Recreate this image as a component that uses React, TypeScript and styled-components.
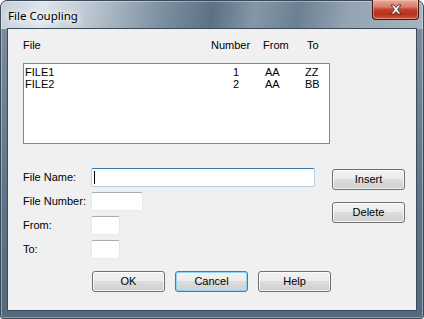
import * as React from 'react'
import styled, { createGlobalStyle, css } from 'styled-components'

const GlobalStyle = createGlobalStyle`
	html, body {
		margin: 0;
		padding: 0;
		background: #ffffff;
	}
	body {
		font-family: 'Liberation Sans', Arial, sans-serif;
		font-size: 11px;
		color: #000000;
	}
`

interface FileRow {
	name: string
	number: number
	from: string
	to: string
}

const rows: FileRow[] = [
	{ name: 'FILE1', number: 1, from: 'AA', to: 'ZZ' },
	{ name: 'FILE2', number: 2, from: 'AA', to: 'BB' },
]

export default function App() {
	return (
		<>
			<GlobalStyle />
			<Window>
				<TitleBar>
					<Title>File Coupling</Title>
					<CloseButton aria-label="Close">
						<svg width="14" height="11" viewBox="0 0 14 11">
							<path
								d="M2 1 L5 1 L7 3.5 L9 1 L12 1 L8.6 5.5 L12 10 L9 10 L7 7.5 L5 10 L2 10 L5.4 5.5 Z"
								fill="#ffffff"
								stroke="#4a2a28"
								strokeWidth="0.9"
								strokeLinejoin="round"
							/>
						</svg>
					</CloseButton>
				</TitleBar>
				<Client>
					<ListHeader>
						<span>File</span>
						<span>Number</span>
						<span>From</span>
						<span>To</span>
					</ListHeader>
					<ListBox>
						{rows.map(row => (
							<ListRow key={row.name}>
								<span>{row.name}</span>
								<NumberCell>{row.number}</NumberCell>
								<span />
								<span>{row.from}</span>
								<span>{row.to}</span>
							</ListRow>
						))}
					</ListBox>
					<Middle>
						<Form>
							<Label>File Name:</Label>
							<TextField $width={224} $focused>
								<Caret />
							</TextField>
							<Label>File Number:</Label>
							<TextField $width={52} />
							<Label>From:</Label>
							<TextField $width={29} />
							<Label>To:</Label>
							<TextField $width={29} />
						</Form>
						<SideButtons>
							<Button>Insert</Button>
							<Button>Delete</Button>
						</SideButtons>
					</Middle>
					<Footer>
						<Button>OK</Button>
						<Button $default>Cancel</Button>
						<Button>Help</Button>
					</Footer>
				</Client>
			</Window>
		</>
	)
}

const Window = styled.div`
	box-sizing: border-box;
	width: 424px;
	height: 319px;
	border: 1px solid #3b4b5a;
	border-radius: 7px 7px 3px 3px;
	padding: 0 6px 7px 6px;
	display: flex;
	flex-direction: column;
	background:
		linear-gradient(
			100deg,
			#c3ced8 0%,
			#dfe6ec 10%,
			#b7c3ce 22%,
			#7d90a1 38%,
			#5c7185 50%,
			#8597a7 60%,
			#6c8093 70%,
			#94a4b2 82%,
			#a7b4c0 100%
		)
		top / 100% 28px no-repeat,
		linear-gradient(180deg, #7d90a2 0%, #5f7488 60%, #55697d 100%);
	box-shadow: inset 0 0 0 1px rgba(255, 255, 255, 0.35);
`

const TitleBar = styled.div`
	height: 27px;
	display: flex;
	justify-content: space-between;
	align-items: flex-start;
	flex-shrink: 0;
`

const Title = styled.div`
	font-family: 'Noto Sans', 'Open Sans', sans-serif;
	font-size: 11.5px;
	line-height: 14px;
	padding: 8px 0 0 1px;
	color: #000000;
	text-shadow: 0 0 6px #ffffff, 0 0 8px #ffffff, 0 0 10px #ffffff;
`

const CloseButton = styled.div`
	box-sizing: border-box;
	width: 47px;
	height: 20px;
	margin-right: -2px;
	margin-top: -1px;
	border: 1px solid #3e1a16;
	border-top: none;
	border-radius: 0 0 4px 4px;
	display: flex;
	align-items: center;
	justify-content: center;
	background: linear-gradient(
		180deg,
		#e8a898 0%,
		#d8806c 35%,
		#c4412b 50%,
		#b8301c 75%,
		#d0583c 100%
	);
	box-shadow: inset 0 0 0 1px rgba(255, 210, 200, 0.45);
`

const Client = styled.div`
	flex: 1;
	background: #f0f0f0;
	border: 1px solid #3a4b5c;
	padding: 10px 0 0 15px;
	display: flex;
	flex-direction: column;
`

const ListHeader = styled.div`
	display: grid;
	grid-template-columns: 188px 52px 44px auto;
	line-height: 13px;
	height: 13px;
`

const ListBox = styled.div`
	box-sizing: border-box;
	width: 307px;
	height: 81px;
	margin-top: 11px;
	background: #ffffff;
	border: 1px solid #828790;
	padding: 2px 0 0 1px;
`

const ListRow = styled.div`
	display: grid;
	grid-template-columns: 170px 44px 26px 40px auto;
	line-height: 12px;
	height: 12px;
	color: #000000;
`

const NumberCell = styled.span`
	text-align: right;
`

const Middle = styled.div`
	display: flex;
	margin-top: 24px;
`

const Form = styled.div`
	width: 309px;
	display: grid;
	grid-template-columns: 68px auto;
	grid-auto-rows: 19px;
	row-gap: 5px;
	align-items: center;
`

const Label = styled.span`
	line-height: 13px;
`

const TextField = styled.div<{ $width: number; $focused?: boolean }>`
	box-sizing: border-box;
	width: ${p => p.$width}px;
	height: 19px;
	background: #ffffff;
	border: 1px solid #e3e9ef;
	border-top-color: #abadb3;
	border-radius: 2px;
	display: flex;
	align-items: center;
	padding-left: 2px;
	${p =>
		p.$focused &&
		css`
			border-color: #b5cfe7;
			border-top-color: #3d7bad;
		`}
`

const Caret = styled.span`
	width: 1px;
	height: 13px;
	background: #000000;
`

const SideButtons = styled.div`
	display: flex;
	flex-direction: column;
	gap: 12px;
	padding-top: 1px;
`

const Button = styled.div<{ $default?: boolean }>`
	box-sizing: border-box;
	width: 73px;
	height: 21px;
	border: 1px solid #707070;
	border-radius: 3px;
	display: flex;
	align-items: center;
	justify-content: center;
	line-height: 13px;
	background: linear-gradient(180deg, #f2f2f2 0%, #ebebeb 49%, #dddddd 50%, #cfcfcf 100%);
	box-shadow: inset 0 0 0 1px rgba(255, 255, 255, 0.75);
	${p =>
		p.$default &&
		css`
			border-color: #3c7fb1;
			box-shadow: inset 0 0 0 1px #8fd3f5;
		`}
`

const Footer = styled.div`
	display: flex;
	gap: 10px;
	margin-top: 12px;
	padding-left: 69px;
`
